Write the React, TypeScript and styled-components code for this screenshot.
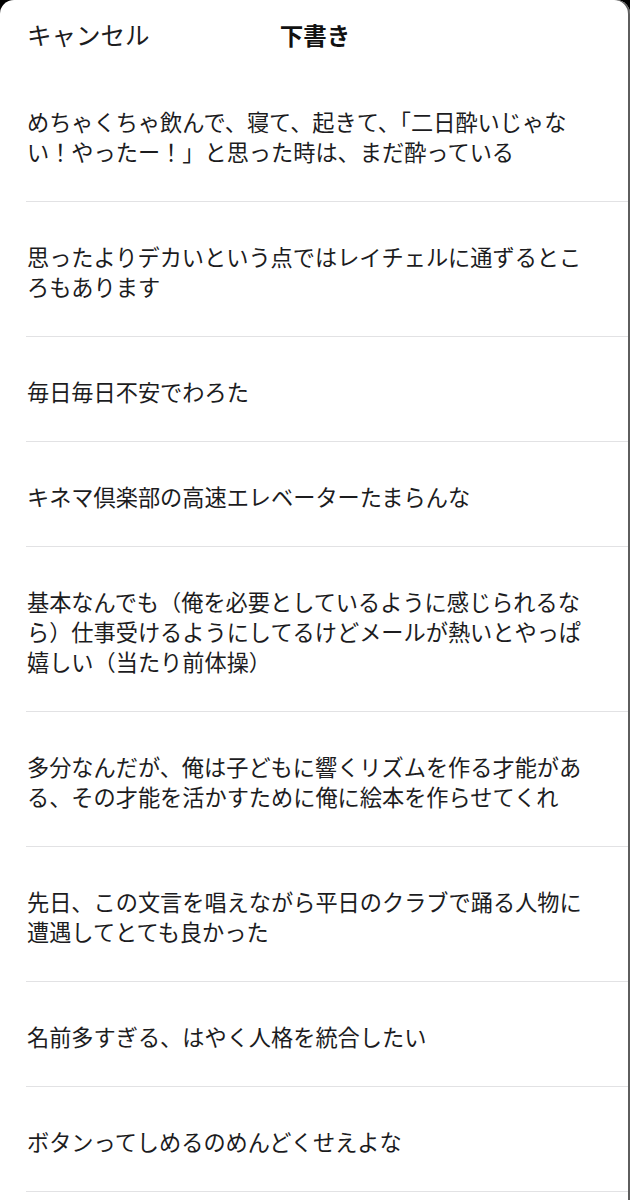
import React from "react";
import styled, { createGlobalStyle } from "styled-components";

const GlobalStyle = createGlobalStyle`
  html, body {
    margin: 0;
    padding: 0;
    background: #000;
  }
  body {
    font-family: "Noto Sans CJK JP", "Noto Sans", sans-serif;
    color: #1c1c1e;
    -webkit-font-smoothing: antialiased;
  }
`;

const Sheet = styled.div`
  width: 630px;
  min-height: 1200px;
  background: #fff;
  border-radius: 14px 14px 0 0;
  box-shadow: inset -2px 0 0 #5e5e5e;
  box-sizing: border-box;
  overflow: hidden;
`;

const Header = styled.header`
  height: 67px;
  display: grid;
  grid-template-columns: 1fr auto 1fr;
  align-items: center;
  padding: 0 27px;
  box-sizing: border-box;
`;

const CancelButton = styled.button`
  justify-self: start;
  background: none;
  border: none;
  padding: 0;
  margin-top: 2px;
  font-family: inherit;
  font-size: 24.5px;
  line-height: 30px;
  color: #1c1c1e;
  cursor: pointer;
`;

const Title = styled.h1`
  margin: 2px 0 0;
  font-size: 23.5px;
  line-height: 30px;
  font-weight: 700;
  color: #111;
`;

const List = styled.ul`
  list-style: none;
  margin: 0;
  padding: 0;
`;

const Row = styled.li`
  margin-left: 26px;
  padding: 39px 36px 35px 1px;
  border-bottom: 1px solid #e2e2e4;
  margin-right: 2px;
`;

const DraftText = styled.p`
  margin: 0;
  font-size: 22.2px;
  line-height: 30px;
  color: #1c1c1e;
  line-break: strict;
`;

const drafts = [
  "めちゃくちゃ飲んで、寝て、起きて、「二日酔いじゃない！やったー！」と思った時は、まだ酔っている",
  "思ったよりデカいという点ではレイチェルに通ずるところもあります",
  "毎日毎日不安でわろた",
  "キネマ倶楽部の高速エレベーターたまらんな",
  "基本なんでも（俺を必要としているように感じられるなら）仕事受けるようにしてるけどメールが熱いとやっぱ嬉しい（当たり前体操）",
  "多分なんだが、俺は子どもに響くリズムを作る才能がある、その才能を活かすために俺に絵本を作らせてくれ",
  "先日、この文言を唱えながら平日のクラブで踊る人物に遭遇してとても良かった",
  "名前多すぎる、はやく人格を統合したい",
  "ボタンってしめるのめんどくせえよな",
];

export default function App() {
  return (
    <>
      <GlobalStyle />
      <Sheet>
        <Header>
          <CancelButton>キャンセル</CancelButton>
          <Title>下書き</Title>
          <span />
        </Header>
        <List>
          {drafts.map((d, i) => (
            <Row key={i}>
              <DraftText>{d}</DraftText>
            </Row>
          ))}
        </List>
      </Sheet>
    </>
  );
}
